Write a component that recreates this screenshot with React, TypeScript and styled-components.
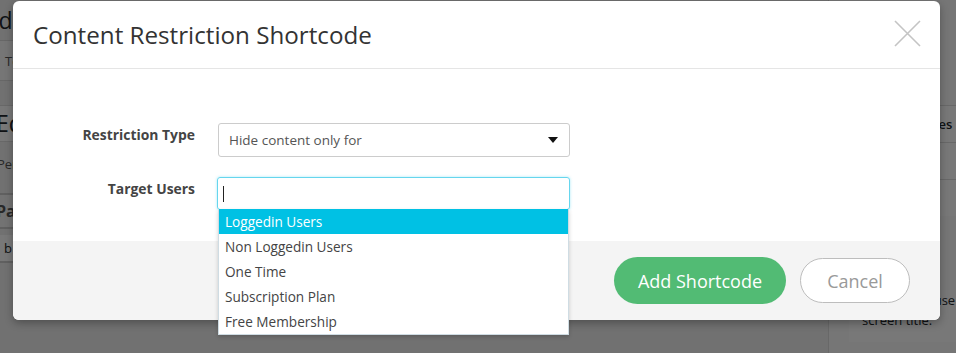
import styled, { createGlobalStyle } from 'styled-components';

const GlobalStyle = createGlobalStyle`
  html, body {
    margin: 0;
    padding: 0;
    background: #f1f1f1;
  }
  body {
    font-family: 'Open Sans', 'Liberation Sans', sans-serif;
  }
`;

const targetOptions = [
  'Loggedin Users',
  'Non Loggedin Users',
  'One Time',
  'Subscription Plan',
  'Free Membership',
];

const App: React.FC = () => {
  return (
    <Screen>
      <GlobalStyle />
      <BgPage>
        <BgMain>
          <BgHeading>Add</BgHeading>
          <BgTabs>
            <BgTab>Text</BgTab>
          </BgTabs>
          <BgGap />
          <BgTitle>Edit</BgTitle>
          <BgMeta>Permalink</BgMeta>
          <BgToolbar>
            <BgTool>Paragraph</BgTool>
          </BgToolbar>
          <BgStatus>b</BgStatus>
        </BgMain>
        <BgSide>
          <BgSideGap />
          <BgSideRow>Attributes</BgSideRow>
          <BgSideRow />
          <BgSideRow />
          <BgHelp>
            Whether to use
            <br />
            screen title.
          </BgHelp>
        </BgSide>
      </BgPage>
      <Overlay />
      <Modal>
        <Header>
          <Title>Content Restriction Shortcode</Title>
          <CloseButton aria-label='Close'>
            <svg width='27' height='27' viewBox='0 0 27 27'>
              <path
                d='M1 1 L26 26 M26 1 L1 26'
                stroke='#c4c4c4'
                strokeWidth='1.6'
                fill='none'
              />
            </svg>
          </CloseButton>
        </Header>
        <Body>
          <FieldRow>
            <Label>Restriction Type</Label>
            <Select>
              <span>Hide content only for</span>
              <Caret />
            </Select>
          </FieldRow>
          <FieldRow>
            <Label>Target Users</Label>
            <ComboWrap>
              <Combo>
                <Cursor />
              </Combo>
              <Dropdown>
                {targetOptions.map((option, i) => (
                  <Option key={option} active={i === 0}>
                    {option}
                  </Option>
                ))}
              </Dropdown>
            </ComboWrap>
          </FieldRow>
        </Body>
        <Footer>
          <PrimaryButton>Add Shortcode</PrimaryButton>
          <GhostButton>Cancel</GhostButton>
        </Footer>
      </Modal>
    </Screen>
  );
};

const Screen = styled.div`
  position: relative;
  width: 956px;
  height: 353px;
  overflow: hidden;
`;

/* page behind the modal */
const BgPage = styled.div`
  display: flex;
  width: 956px;
  height: 353px;
  background: #f1f1f1;
  color: #23282d;
`;

const BgMain = styled.div`
  width: 828px;
  flex-shrink: 0;
  display: flex;
  flex-direction: column;
`;

const BgHeading = styled.div`
  height: 40px;
  margin-left: -30px;
  font-size: 23px;
  line-height: 40px;
  border-bottom: 1px solid #dcdcdc;
`;

const BgTabs = styled.div`
  height: 39px;
  display: flex;
  align-items: center;
  padding-left: 5px;
  background: #fafafa;
  border-bottom: 1px solid #dcdcdc;
`;

const BgTab = styled.span`
  font-size: 13px;
  color: #555;
`;

const BgGap = styled.div`
  height: 24px;
`;

const BgTitle = styled.div`
  height: 35px;
  margin-left: -4px;
  font-size: 23px;
  line-height: 35px;
  background: #fff;
  border-top: 1px solid #ddd;
  border-bottom: 1px solid #ddd;
`;

const BgMeta = styled.div`
  height: 51px;
  margin-left: -3px;
  font-size: 13px;
  line-height: 44px;
  color: #555;
`;

const BgToolbar = styled.div`
  height: 32px;
  display: flex;
  align-items: center;
  border-top: 2px solid #ccc;
  border-bottom: 2px solid #ccc;
  background: #f5f5f5;
`;

const BgTool = styled.span`
  font-size: 16px;
  font-weight: 700;
  color: #555;
  margin-left: -4px;
`;

const BgStatus = styled.div`
  width: 20px;
  height: 26px;
  margin-top: 6px;
  padding-left: 4px;
  font-size: 13px;
  line-height: 26px;
  background: #fff;
  border-bottom: 2px solid #ccc;
`;

const BgSide = styled.div`
  flex: 1;
  min-width: 0;
  overflow: hidden;
  display: flex;
  flex-direction: column;
  background: #fafafa;
  border-left: 1px solid #ddd;
`;

const BgSideGap = styled.div`
  height: 105px;
`;

const BgSideRow = styled.div`
  height: 36px;
  padding-left: 60px;
  font-size: 13px;
  font-weight: 600;
  line-height: 36px;
  white-space: nowrap;
  overflow: hidden;
  border-top: 1px solid #ddd;
  background: #fff;
`;

const BgHelp = styled.div`
  margin: 74px 0 0 20px;
  padding: 0 0 12px 13px;
  font-size: 13px;
  line-height: 20px;
  white-space: nowrap;
  background: #fff;
`;

const Overlay = styled.div`
  position: absolute;
  inset: 0;
  background: rgba(0, 0, 0, 0.53);
`;

/* modal */
const Modal = styled.div`
  position: absolute;
  left: 13px;
  top: 1px;
  width: 927px;
  height: 319px;
  display: flex;
  flex-direction: column;
  background: #fff;
  border-radius: 6px;
  box-shadow: 0 3px 9px rgba(0, 0, 0, 0.3);
`;

const Header = styled.div`
  height: 67px;
  flex-shrink: 0;
  display: flex;
  align-items: center;
  justify-content: space-between;
  padding: 0 19px 0 20px;
  border-bottom: 1px solid #e5e5e5;
`;

const Title = styled.h2`
  margin: 0;
  font-size: 24.2px;
  font-weight: 400;
  color: #333;
`;

const CloseButton = styled.button`
  display: flex;
  padding: 0;
  border: none;
  background: transparent;
  cursor: pointer;
  margin-top: -3px;
`;

const Body = styled.div`
  flex: 1;
  display: flex;
  flex-direction: column;
  gap: 20px;
  padding-top: 54px;
`;

const FieldRow = styled.div`
  display: grid;
  grid-template-columns: 182px 352px;
  column-gap: 23px;
  align-items: start;
`;

const Label = styled.label`
  text-align: right;
  font-size: 13.9px;
  font-weight: 700;
  color: #444;
  line-height: 18px;
  padding-top: 3px;
`;

const Select = styled.div`
  box-sizing: border-box;
  height: 34px;
  display: flex;
  align-items: center;
  justify-content: space-between;
  padding: 0 11px 0 10px;
  border: 1px solid #ccc;
  border-radius: 3px;
  font-size: 13.5px;
  color: #555;
`;

const Caret = styled.span`
  width: 0;
  height: 0;
  border-left: 5.5px solid transparent;
  border-right: 5.5px solid transparent;
  border-top: 6px solid #111;
`;

const ComboWrap = styled.div`
  position: relative;
  margin-left: -1px;
`;

const Combo = styled.div`
  box-sizing: border-box;
  height: 33px;
  display: flex;
  align-items: center;
  padding-left: 5px;
  border: 1px solid #66d6ee;
  border-radius: 3px;
  box-shadow: 0 0 3px rgba(0, 192, 228, 0.35);
`;

const Cursor = styled.span`
  width: 1px;
  height: 16px;
  background: #222;
`;

const Dropdown = styled.ul`
  position: absolute;
  left: 1px;
  right: 1px;
  top: 32px;
  margin: 0;
  padding: 0;
  list-style: none;
  background: #fff;
  border: 1px solid #cfdce3;
  border-top: none;
  box-shadow: 0 2px 4px rgba(0, 0, 0, 0.18);
  z-index: 2;
`;

const Option = styled.li<{ active: boolean }>`
  height: 25px;
  padding-left: 6px;
  font-size: 13.6px;
  line-height: 25px;
  color: ${({ active }) => (active ? '#fff' : '#444')};
  background: ${({ active }) => (active ? '#00c1e4' : '#fff')};
`;

const Footer = styled.div`
  height: 79px;
  flex-shrink: 0;
  display: flex;
  align-items: center;
  justify-content: flex-end;
  gap: 14px;
  padding-right: 30px;
  background: #f4f4f4;
  border-radius: 0 0 6px 6px;
`;

const PrimaryButton = styled.button`
  width: 172px;
  height: 47px;
  border: none;
  border-radius: 24px;
  background: #52bb74;
  color: #fff;
  font-family: inherit;
  font-size: 18px;
  cursor: pointer;
`;

const GhostButton = styled.button`
  width: 110px;
  height: 45px;
  border: 1px solid #bdbdbd;
  border-radius: 23px;
  background: #fff;
  color: #999;
  font-family: inherit;
  font-size: 18px;
  cursor: pointer;
`;

export default App;
